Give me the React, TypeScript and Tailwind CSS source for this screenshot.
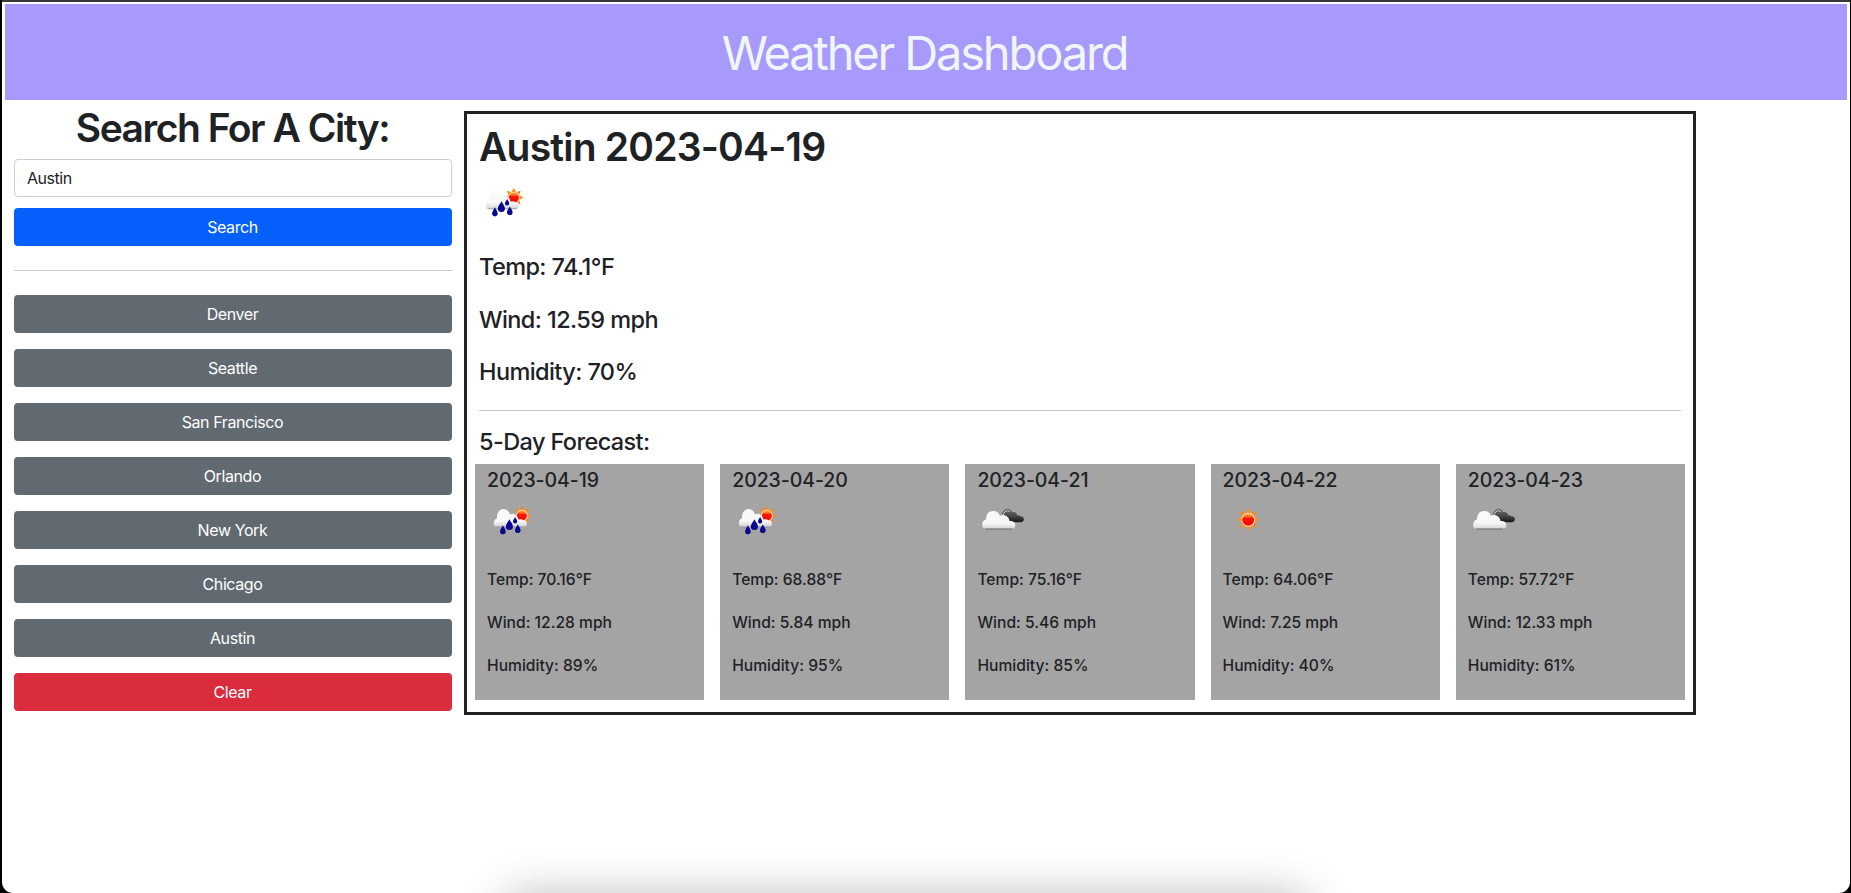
import React, { useState } from 'react';

type IconName = 'rain' | 'clouds' | 'sun';

interface Forecast {
  date: string;
  icon: IconName;
  temp: string;
  wind: string;
  humidity: string;
}

const cities = ['Denver', 'Seattle', 'San Francisco', 'Orlando', 'New York', 'Chicago', 'Austin'];

const forecasts: Forecast[] = [
  { date: '2023-04-19', icon: 'rain', temp: '70.16', wind: '12.28', humidity: '89' },
  { date: '2023-04-20', icon: 'rain', temp: '68.88', wind: '5.84', humidity: '95' },
  { date: '2023-04-21', icon: 'clouds', temp: '75.16', wind: '5.46', humidity: '85' },
  { date: '2023-04-22', icon: 'sun', temp: '64.06', wind: '7.25', humidity: '40' },
  { date: '2023-04-23', icon: 'clouds', temp: '57.72', wind: '12.33', humidity: '61' },
];

const RAY_ANGLES = [0, 45, 90, 135, 180, 225, 270, 315];

function Sun({ cx, cy, scale = 1 }: { cx: number; cy: number; scale?: number }) {
  return (
    <g transform={`translate(${cx} ${cy}) scale(${scale})`}>
      {RAY_ANGLES.map((a) => (
        <path key={a} d="M-2.9 -6.6 L0 -12.2 L2.9 -6.6 Z" fill="#fb8a1c" transform={`rotate(${a})`} />
      ))}
      <circle r="7.4" fill="#ffe3c4" />
      <circle r="6.3" fill="url(#sunFill)" />
    </g>
  );
}

function Drop({ x, top, bottom, r }: { x: number; top: number; bottom: number; r: number }) {
  const cy = bottom - r;
  return (
    <path
      d={`M${x} ${top} C${x + r * 0.4} ${top + r * 0.8} ${x + r} ${cy - r * 0.7} ${x + r} ${cy} A${r} ${r} 0 0 1 ${x - r} ${cy} C${x - r} ${cy - r * 0.7} ${x - r * 0.4} ${top + r * 0.8} ${x} ${top} Z`}
      fill="url(#dropFill)"
    />
  );
}

function WeatherIcon({ name }: { name: IconName }) {
  return (
    <svg width="50" height="50" viewBox="0 0 50 50" className="block">
      {name === 'rain' && (
        <g transform="translate(0.8 -0.2)">
          <Sun cx={34} cy={19.8} scale={0.8} />
          <path
            d="M9.5 31.5 C7.4 31.5 6 29.6 6 27.4 C6 25 7.4 23.3 9.2 22.8 C8.8 17.3 11.4 13.2 15.6 13.2 C19.2 13.2 21.4 15.6 22.3 18.9 C23.6 17.9 25.2 17.8 26.8 18.4 C29 19.3 30.2 21.2 30.6 24 C32.2 23 34.4 23.2 35.6 24.6 C37.8 24.2 39.2 25.8 39 28 C38.8 30.2 37.6 31.5 35.6 31.5 Z"
            fill="url(#cloudFill)"
          />
          <Drop x={21.6} top={23.4} bottom={34.3} r={3.5} />
          <Drop x={15.1} top={29.4} bottom={38.6} r={2.8} />
          <Drop x={30} top={28.6} bottom={37.2} r={2.8} />
          <Drop x={27.3} top={21.2} bottom={27.8} r={2.1} />
        </g>
      )}
      {name === 'clouds' && (
        <g transform="translate(0.7 0)">
          <path
            d="M26 26 C24 19.5 25.6 13.6 30 13.6 C32.6 13.6 34 15 34.6 16.2 C36.8 15.4 39 16.4 39.6 19.4 C40.8 19 42 19.3 42.6 20.2 C44.8 20 46.3 21.4 46.1 23.2 C46 25 44.8 26.2 42.8 26.2 Z"
            fill="url(#darkCloudFill)"
          />
          <path d="M24.2 19.8 C24.8 15.6 27 13.2 29.8 13.2 C31.4 13.2 32.6 13.9 33.4 15" fill="none" stroke="#5b5b5b" strokeWidth="0.8" />
          <path d="M25.4 20 C25.8 16.6 27.6 14.7 30 14.8 C31 14.8 31.8 15.2 32.3 15.8" fill="none" stroke="#e4e4e4" strokeWidth="0.8" />
          <path
            d="M8.6 33.6 C6.2 33.6 4.5 31.5 4.5 28.8 C4.5 26 6 24 8.4 23.6 C8.2 18.2 11 15 15.6 15 C19 15 21.4 16.8 22.2 19.8 C24 18.8 26.6 18.8 28.6 20 C30.6 21.2 31.6 23 31.8 25 C34.8 24.4 37.4 26 37.6 29 C37.6 31.8 35.8 33.6 33.4 33.6 Z"
            fill="url(#cloudFill)"
          />
          <path d="M8 33 L34 33" stroke="#787878" strokeWidth="1.1" strokeLinecap="round" />
        </g>
      )}
      {name === 'sun' && <Sun cx={25.2} cy={23.7} scale={0.95} />}
    </svg>
  );
}

/* Gradients shared by every weather icon. */
function IconDefs() {
  return (
    <svg width="0" height="0" className="absolute" aria-hidden="true">
      <defs>
        <linearGradient id="sunFill" x1="0" y1="0" x2="0" y2="1">
          <stop offset="0" stopColor="#ffab2e" />
          <stop offset="0.25" stopColor="#fb6a20" />
          <stop offset="0.4" stopColor="#fd1408" />
          <stop offset="1" stopColor="#f50505" />
        </linearGradient>
        <linearGradient id="cloudFill" x1="0" y1="0" x2="0" y2="1">
          <stop offset="0" stopColor="#fafafa" />
          <stop offset="0.65" stopColor="#f8f8f8" />
          <stop offset="0.9" stopColor="#dcdcdc" />
          <stop offset="1" stopColor="#909090" />
        </linearGradient>
        <linearGradient id="darkCloudFill" x1="0" y1="0" x2="0" y2="1">
          <stop offset="0" stopColor="#6a6a6a" />
          <stop offset="0.5" stopColor="#484848" />
          <stop offset="1" stopColor="#161616" />
        </linearGradient>
        <linearGradient id="dropFill" x1="0" y1="0" x2="1" y2="0">
          <stop offset="0" stopColor="#04045a" />
          <stop offset="0.5" stopColor="#0808b4" />
          <stop offset="1" stopColor="#04045a" />
        </linearGradient>
      </defs>
    </svg>
  );
}

function ForecastCard({ day }: { day: Forecast }) {
  return (
    <article className="h-[236px] bg-[#a4a4a4] px-3 pt-1">
      <h5 className="text-[19.5px] leading-6 font-medium tracking-[-0.004em]">{day.date}</h5>
      <div className="mt-1 h-[73.5px]">
        <WeatherIcon name={day.icon} />
      </div>
      <div className="flex flex-col gap-6 text-[15.6px] leading-[19px] font-medium tracking-[0.001em]">
        <p>Temp: {day.temp}°F</p>
        <p>Wind: {day.wind} mph</p>
        <p>Humidity: {day.humidity}%</p>
      </div>
    </article>
  );
}

const buttonBase = 'block h-[38px] w-full rounded-[4px] pr-px text-center text-base tracking-[-0.025em] text-white';

export default function App() {
  const [query, setQuery] = useState('Austin');

  return (
    <div className="h-[893px] overflow-hidden bg-black pr-px pl-[2px] font-['Inter','Liberation_Sans',sans-serif] text-[#1e2225]">
      <IconDefs />
      <div className="relative h-full overflow-hidden rounded-b-[11px] border-t-2 border-[#38373a] bg-white">
        <header className="mt-[2px] mr-[3px] ml-[3px] h-24 bg-[#a89afb] pr-[3px] text-center">
          <h1 className="text-[47px] leading-[98px] font-normal tracking-[-0.0456em] text-[#f0f6ff]">Weather Dashboard</h1>
        </header>

        <div className="flex items-start">
          <aside className="ml-3 w-[438px] pt-1">
            <h2 className="pr-px text-center text-[39px] leading-[47px] font-semibold tracking-[-0.038em]">Search For A City:</h2>
            <input
              className="mt-2 block h-[38px] w-full rounded-[4px] border border-[#c9ced4] bg-white px-3 text-base tracking-[-0.029em] outline-none"
              value={query}
              onChange={(e) => setQuery(e.target.value)}
            />
            <button className={`${buttonBase} mt-[11px] bg-[#0660fb]`}>Search</button>
            <hr className="mt-6 border-t border-[#c4c5c6]" />
            <div className="mt-6 flex flex-col gap-4">
              {cities.map((city) => (
                <button key={city} className={`${buttonBase} bg-[#626a71]`}>
                  {city}
                </button>
              ))}
              <button className={`${buttonBase} bg-[#da2c3d]`}>Clear</button>
            </div>
          </aside>

          <main className="mt-[11px] ml-3 h-[604px] w-[1232px] border-[3px] border-[#1e2225]">
            <section className="px-3 pt-[9px]">
              <h2 className="text-[39px] leading-[48px] font-semibold tracking-[-0.0205em]">Austin 2023-04-19</h2>
              <div className="mt-[7px] h-[74px]">
                <WeatherIcon name="rain" />
              </div>
              <div className="flex flex-col gap-[23.5px] text-[23.5px] leading-[29px] font-medium tracking-[-0.025em]">
                <p>Temp: 74.1°F</p>
                <p>Wind: 12.59 mph</p>
                <p>Humidity: 70%</p>
              </div>
              <hr className="mt-6 border-t border-[#c4c5c6]" />
              <h4 className="mt-4 text-[23.5px] leading-[29px] font-medium tracking-[-0.026em]">5-Day Forecast:</h4>
            </section>
            <section className="mt-2 grid grid-cols-5 gap-4 px-2">
              {forecasts.map((day) => (
                <ForecastCard key={day.date} day={day} />
              ))}
            </section>
          </main>
        </div>

        {/* Soft shadow rising from the bottom edge of the window */}
        <div className="absolute bottom-[-40px] left-[506px] h-8 w-[796px] rounded-[10px] shadow-[0_0_46px_4px_rgba(0,0,0,0.3)]" />
      </div>
    </div>
  );
}
